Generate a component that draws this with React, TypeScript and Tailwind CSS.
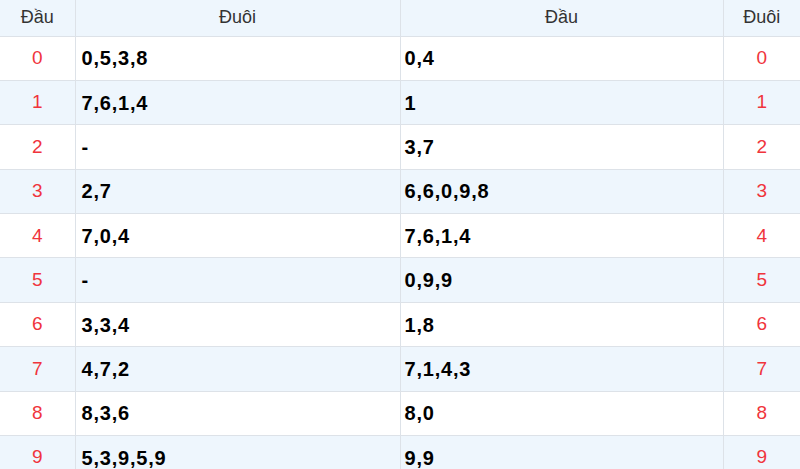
const ROWS: [string, string][] = [
  ['0,5,3,8', '0,4'],
  ['7,6,1,4', '1'],
  ['-', '3,7'],
  ['2,7', '6,6,0,9,8'],
  ['7,0,4', '7,6,1,4'],
  ['-', '0,9,9'],
  ['3,3,4', '1,8'],
  ['4,7,2', '7,1,4,3'],
  ['8,3,6', '8,0'],
  ['5,3,9,5,9', '9,9'],
];

export default function App() {
  return (
    <div className="w-[800px] h-[469px] overflow-hidden bg-white font-['Liberation_Sans',Arial,sans-serif]">
      <table className="w-[800px] table-fixed border-collapse">
        <colgroup>
          <col className="w-[75px]" />
          <col className="w-[325px]" />
          <col className="w-[323px]" />
          <col className="w-[77px]" />
        </colgroup>
        <thead>
          <tr className="h-[36px] bg-[#eef6fd] text-[18px] text-[#333]">
            <th className="font-normal border-r border-b border-[#dde2e8]">Đầu</th>
            <th className="font-normal border-r border-b border-[#dde2e8]">Đuôi</th>
            <th className="font-normal border-r border-b border-[#dde2e8]">Đầu</th>
            <th className="font-normal border-b border-[#dde2e8]">Đuôi</th>
          </tr>
        </thead>
        <tbody>
          {ROWS.map(([tail, head], i) => (
            <tr key={i} className={`h-[44.4px] ${i % 2 === 1 ? 'bg-[#eef6fd]' : 'bg-white'}`}>
              <td className="border-r border-b border-[#dde2e8] text-center text-[19px] text-[#f0343c]">{i}</td>
              <td className="border-r border-b border-[#dde2e8] pl-[6px] text-[20px] tracking-[0.8px] font-bold text-black">{tail}</td>
              <td className="border-r border-b border-[#dde2e8] pl-[4px] text-[20px] tracking-[0.8px] font-bold text-black">{head}</td>
              <td className="border-b border-[#dde2e8] text-center text-[19px] text-[#f0343c]">{i}</td>
            </tr>
          ))}
        </tbody>
      </table>
    </div>
  );
}
